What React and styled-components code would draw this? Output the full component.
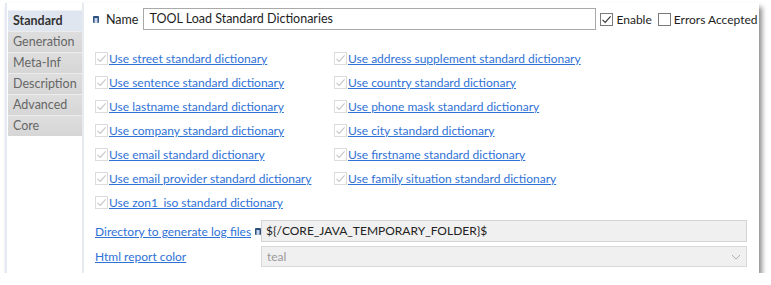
import React from "react";
import styled, { createGlobalStyle } from "styled-components";

const Global = createGlobalStyle`
  html, body { margin: 0; padding: 0; background: #fff; }
  body { font-family: Lato, "Noto Sans", sans-serif; font-size: 12px; color: #1e1e1e; }
`;

const tabs = ["Standard", "Generation", "Meta-Inf", "Description", "Advanced", "Core"];

const left = [
  "Use street standard dictionary",
  "Use sentence standard dictionary",
  "Use lastname standard dictionary",
  "Use company standard dictionary",
  "Use email standard dictionary",
  "Use email provider standard dictionary",
  "Use zon1_iso standard dictionary",
];

const right = [
  "Use address supplement standard dictionary",
  "Use country standard dictionary",
  "Use phone mask standard dictionary",
  "Use city standard dictionary",
  "Use firstname standard dictionary",
  "Use family situation standard dictionary",
];

const Check = ({ checked, disabled }) => (
  <Box disabled={disabled}>
    {checked && (
      <svg width="11" height="11" viewBox="0 0 11 11">
        <path d="M1.5 5.8 L4.2 8.4 L9.6 2.4" fill="none" stroke={disabled ? "#c6c6c6" : "#333"} strokeWidth="1.1" />
      </svg>
    )}
  </Box>
);

const Pin = ({ gap }) => (
  <PinIcon gap={gap}>
    <svg width="6" height="7" viewBox="0 0 6 7">
      <rect x="0" y="0" width="6" height="7" rx="1" fill="#2d4f7c" />
      <rect x="1.5" y="2" width="3" height="5" fill="#c7d6ea" />
    </svg>
  </PinIcon>
);

const App = () => {
  return (
    <>
      <Global />
      <Window>
        <Sidebar>
          {tabs.map((t, i) => (
            <Tab key={t} active={i === 0}>{t}</Tab>
          ))}
        </Sidebar>
        <Content>
          <NameRow>
            <Pin gap="0 7px 0 0" />
            <Label>Name</Label>
            <TextInput>TOOL Load Standard Dictionaries</TextInput>
            <CheckLabel><Check checked />Enable</CheckLabel>
            <CheckLabel><Check />Errors Accepted</CheckLabel>
          </NameRow>
          <Columns>
            <Column>
              {left.map((t) => (
                <OptionRow key={t}><Check checked disabled /><Link>{t}</Link></OptionRow>
              ))}
            </Column>
            <Column>
              {right.map((t) => (
                <OptionRow key={t}><Check checked disabled /><Link>{t}</Link></OptionRow>
              ))}
            </Column>
          </Columns>
          <Fields>
            <FieldLabel><Link>Directory to generate log files</Link><Pin gap="0 0 0 4px" /></FieldLabel>
            <ReadOnly>${"{"}/CORE_JAVA_TEMPORARY_FOLDER{"}"}$</ReadOnly>
            <FieldLabel><Link>Html report color</Link></FieldLabel>
            <Select>
              <span>teal</span>
              <svg width="10" height="6" viewBox="0 0 10 6">
                <path d="M1 1 L5 5 L9 1" fill="none" stroke="#b0b0b0" strokeWidth="1" />
              </svg>
            </Select>
          </Fields>
        </Content>
      </Window>
    </>
  );
};

export default App;

const Window = styled.div`
  margin: 3px 0 0 5px;
  width: 754px;
  height: 270px;
  box-sizing: border-box;
  background: #fff;
  border-left: 2px solid #e4e9f5;
  display: flex;
  box-shadow: 3px 4px 5px rgba(0, 0, 0, 0.45);
`;

const Sidebar = styled.div`
  flex-shrink: 0;
  width: 74px;
  padding: 7px 0 0 1px;
  border-right: 2px solid #e6ebf2;
  display: flex;
  flex-direction: column;
`;

const Tab = styled.div`
  height: 21px;
  line-height: 20px;
  padding-left: 5px;
  box-sizing: border-box;
  font-size: 12.5px;
  font-weight: ${(p) => (p.active ? 700 : 400)};
  color: ${(p) => (p.active ? "#333" : "#666")};
  background: ${(p) => (p.active ? "#dfe6ef" : "linear-gradient(#dedede, #d6d6d6)")};
  border-top: 1px solid ${(p) => (p.active ? "#eef2f7" : "#ececec")};
`;

const Content = styled.div`
  flex: 1;
  min-width: 0;
  padding: 5px 0 0 9px;
  display: flex;
  flex-direction: column;
`;

const NameRow = styled.div`
  display: flex;
  align-items: center;
  height: 22px;
`;

const PinIcon = styled.span`
  display: inline-flex;
  margin: ${(p) => p.gap};
`;

const Label = styled.span`
  margin-right: 5px;
  font-size: 12.5px;
`;

const TextInput = styled.div`
  flex-shrink: 0;
  width: 453px;
  height: 22px;
  box-sizing: border-box;
  border: 1px solid #a9a9a9;
  padding: 0 5px;
  line-height: 20px;
  font-size: 12.5px;
  margin-right: 4px;
`;

const CheckLabel = styled.label`
  display: flex;
  align-items: center;
  gap: 3px;
  margin-right: 6px;
  white-space: nowrap;
  font-size: 12px;
  &:last-child { margin-right: 0; }
`;

const Box = styled.span`
  width: 11px;
  height: 11px;
  border: 1px solid ${(p) => (p.disabled ? "#dcdcdc" : "#7a7a7a")};
  background: #fff;
  display: inline-flex;
  flex-shrink: 0;
`;

const Columns = styled.div`
  display: flex;
  margin-top: 16px;
  padding-left: 2px;
`;

const Column = styled.div`
  display: flex;
  flex-direction: column;
  width: 239px;
`;

const OptionRow = styled.div`
  display: flex;
  align-items: center;
  gap: 1px;
  height: 24px;
`;

const Link = styled.span`
  color: #2f72d6;
  text-decoration: underline;
  white-space: nowrap;
`;

const Fields = styled.div`
  display: grid;
  grid-template-columns: 166px 486px;
  row-gap: 4px;
  margin-top: 6px;
  padding-left: 2px;
  align-items: center;
`;

const FieldLabel = styled.div`
  display: flex;
  align-items: center;
`;

const ReadOnly = styled.div`
  height: 22px;
  box-sizing: border-box;
  border: 1px solid #d3d3d3;
  background: #f0f0f0;
  padding: 0 4px;
  line-height: 20px;
  color: #222;
`;

const Select = styled.div`
  height: 21px;
  box-sizing: border-box;
  border: 1px solid #d9d9d9;
  background: #f0f0f0;
  padding: 0 5px;
  display: flex;
  align-items: center;
  justify-content: space-between;
  color: #9a9a9a;
`;
